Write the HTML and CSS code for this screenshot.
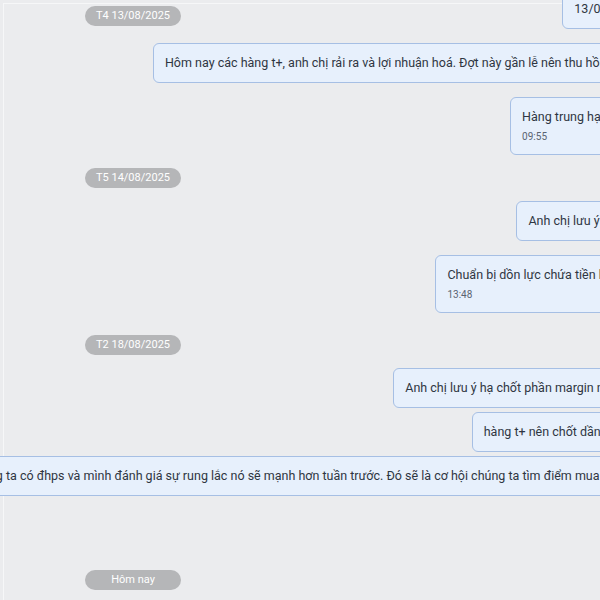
FILE: index.html
```html
<!DOCTYPE html>
<html lang="vi">
<head>
    <meta charset="UTF-8">
    <meta name="viewport" content="width=device-width, initial-scale=1.0">
    <title>Tin nhắn</title>
    <link rel="stylesheet" href="styles.css">
</head>
<body>
    <div class="frame">
        <div class="chat">
            <div class="row first">
                <div class="date-pill">T4 13/08/2025</div>
                <div class="bubble">13/08 các mã đều tăng mạnh ạ</div>
            </div>

            <div class="row">
                <div class="bubble">Hôm nay các hàng t+, anh chị rải ra và lợi nhuận hoá. Đợt này gần lễ nên thu hồi tiền mặt, giữ tỷ trọng thấp</div>
            </div>
            <div class="row">
                <div class="bubble">
                    <div class="text">Hàng trung hạn anh chị giữ nguyên vị thế</div>
                    <div class="time">09:55</div>
                </div>
            </div>

            <div class="date-pill">T5 14/08/2025</div>

            <div class="row after-pill">
                <div class="bubble">Anh chị lưu ý giải ngân từ từ theo nhịp ạ</div>
            </div>
            <div class="row">
                <div class="bubble">
                    <div class="text">Chuẩn bị dồn lực chứa tiền bắt đáy nhịp điều chỉnh tới.</div>
                    <div class="time">13:48</div>
                </div>
            </div>

            <div class="date-pill gap-top">T2 18/08/2025</div>

            <div class="row after-pill">
                <div class="bubble">Anh chị lưu ý hạ chốt phần margin nếu tài khoản đang vay cao</div>
            </div>
            <div class="row tight">
                <div class="bubble">hàng t+ nên chốt dần, giữ lại các mã hàng khỏe.</div>
            </div>
            <div class="row tight">
                <div class="bubble">Tuần sau chúng ta có đhps và mình đánh giá sự rung lắc nó sẽ mạnh hơn tuần trước. Đó sẽ là cơ hội chúng ta tìm điểm mua tốt hơn cho danh mục mới</div>
            </div>

            <div class="date-pill today">Hôm nay</div>
        </div>
    </div>
</body>
</html>
```

FILE: styles.css
```css
* {
    margin: 0;
    padding: 0;
    box-sizing: border-box;
}

body {
    font-family: Roboto, "Noto Sans", Arial, sans-serif;
    background: #ebecee;
    color: #2f3642;
    height: 100vh;
    overflow: hidden;
}

/* cadre clair en haut a gauche */
.frame {
    margin: 3px 0 0 3px;
    border-top: 1px solid #f6f7f8;
    border-left: 1px solid #f6f7f8;
    height: 100%;
}

.chat {
    width: 756px;
    margin-top: -15px;
    padding-left: 81px;
    display: flex;
    flex-direction: column;
}

.row {
    display: flex;
    justify-content: flex-end;
    margin-top: 14px;
}

.row.first {
    margin-top: 0;
    justify-content: space-between;
    align-items: flex-start;
}

.row.after-pill {
    margin-top: 13px;
}

.row.tight {
    margin-top: 4px;
}

.bubble {
    white-space: nowrap;
    flex-shrink: 0;
    background: #e7f0fc;
    border: 1px solid #a6bfe4;
    border-radius: 6px;
    padding: 10px 11px;
    font-size: 12.5px;
    line-height: 18px;
}

.time {
    font-size: 10px;
    line-height: 14px;
    margin-top: 4px;
    color: #5a6472;
}

.date-pill {
    width: 96px;
    height: 20px;
    border-radius: 10px;
    background: #b5b6b8;
    color: #ffffff;
    font-size: 11px;
    line-height: 20px;
    text-align: center;
    align-self: flex-start;
    margin: 13px 0 0;
}

.row.first .date-pill {
    margin-top: 17px;
}

.date-pill.gap-top {
    margin-top: 22px;
}

.date-pill.today {
    margin-top: 74px;
}
```
